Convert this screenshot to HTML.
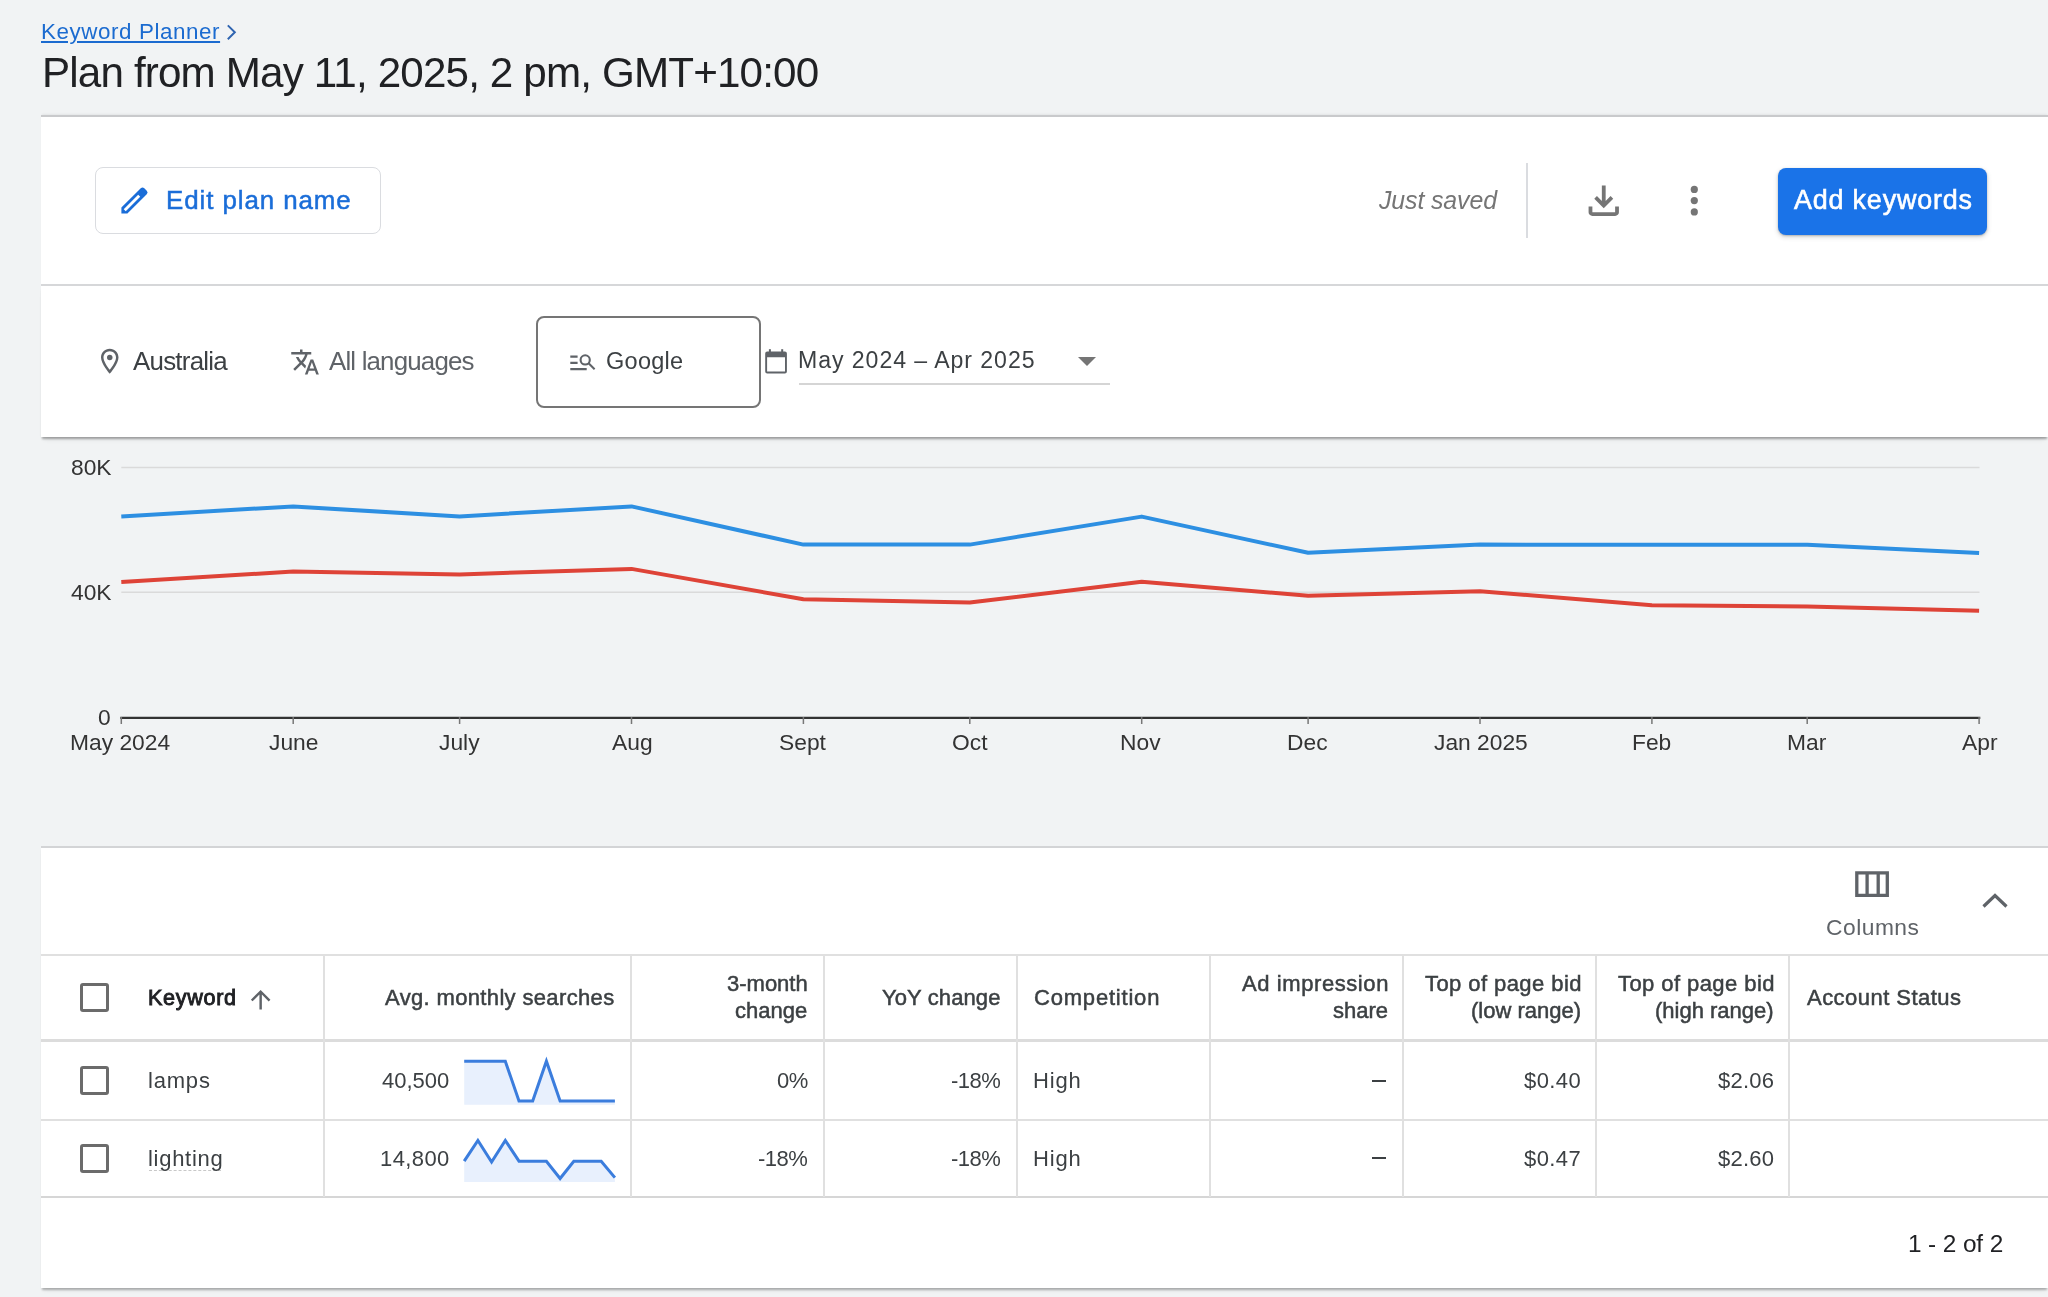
<!DOCTYPE html>
<html>
<head>
<meta charset="utf-8">
<style>
html,body{margin:0;padding:0;}
body{width:2048px;height:1297px;overflow:hidden;position:relative;background:#f1f3f4;font-family:"Liberation Sans",sans-serif;}
.t{position:absolute;white-space:nowrap;font-family:"Liberation Sans",sans-serif;will-change:transform;}
.a{position:absolute;}
.panel{position:absolute;background:#fff;}
.chk{position:absolute;width:22.8px;height:22.8px;border:3.5px solid #6b6b6b;border-radius:3px;box-sizing:content-box;}
.vl{position:absolute;width:2px;background:#e0e0e0;}
.hl{position:absolute;height:2px;background:#e0e0e0;}
</style>
</head>
<body>
<svg class="a" style="left:220px;top:20px" width="24" height="26" viewBox="0 0 24 26"><path fill="none" stroke="#2f64b0" stroke-width="2" d="M7.8,5.4 L14.8,12.3 L7.8,19.2"/></svg>
<!-- header panel -->
<div class="panel" style="left:41px;top:115px;width:2007px;height:170px;border-top:2px solid #c9cacc;box-shadow:0 -2px 2px -1px rgba(0,0,0,0.06);"></div>
<!-- divider -->
<div class="a" style="left:41px;top:284px;width:2007px;height:2px;background:#d6d7d9;"></div>
<!-- filter panel -->
<div class="panel" style="left:41px;top:286px;width:2007px;height:151px;box-shadow:0 3px 2px -1px rgba(0,0,0,0.30),0 5px 5px -3px rgba(0,0,0,0.10);"></div>

<!-- edit plan name button -->
<div class="a" style="left:95px;top:167px;width:284px;height:65px;border:1.5px solid #dadce0;border-radius:8px;background:#fff;"></div>
<!-- pencil -->
<svg class="a" style="left:110px;top:180px" width="44" height="40" viewBox="0 0 44 40"><path fill="#1a6dd8" fill-rule="evenodd" d="M11.4,33.6 V27.6 L30.75,8.26 Q32.52,6.49 34.29,8.26 L36.75,10.72 Q38.52,12.49 36.75,14.26 L17.4,33.6 Z M13.71,29.26 L28.2,14.77 L30.24,16.8 L15.74,31.3 Z"/></svg>

<!-- separator -->
<div class="a" style="left:1526px;top:163px;width:2px;height:75px;background:#dadce0;"></div>
<!-- download icon -->
<svg class="a" style="left:1580.5px;top:178px" width="45.5" height="45.5" viewBox="0 -960 960 960"><path fill="#757575" d="M480-320 280-520l56-58 104 104v-326h80v326l104-104 56 58-200 200ZM240-160q-33 0-56.5-23.5T160-240v-120h80v120h480v-120h80v120q0 33-23.5 56.5T720-160H240Z"/></svg>
<!-- more vert -->
<svg class="a" style="left:1684px;top:180px" width="20" height="40" viewBox="0 0 20 40"><circle cx="10.3" cy="9.4" r="3.6" fill="#757575"/><circle cx="10.3" cy="20.6" r="3.6" fill="#757575"/><circle cx="10.3" cy="31.9" r="3.6" fill="#757575"/></svg>
<!-- add keywords -->
<div class="a" style="left:1778px;top:168px;width:209px;height:67px;background:#1a73e8;border-radius:8px;box-shadow:0 1px 2px rgba(60,64,67,0.3),0 2px 4px 1px rgba(60,64,67,0.15);"></div>

<!-- filters -->
<svg class="a" style="left:99.5px;top:348.4px" width="19.5" height="26.25" viewBox="4.2 1.5 15.6 21"><path fill="#5f6368" d="M12 2C8.13 2 5 5.13 5 9c0 5.25 7 13 7 13s7-7.75 7-13c0-3.87-3.13-7-7-7zM7 9c0-2.76 2.24-5 5-5s5 2.24 5 5c0 2.88-2.88 7.19-5 9.88C9.92 16.21 7 11.85 7 9z"/><circle cx="12" cy="9" r="2.2" fill="#5f6368"/></svg>
<svg class="a" style="left:290px;top:347px" width="30" height="30" viewBox="0 -960 960 960"><path fill="#5f6368" d="m476-80 182-480h84L924-80h-84l-43-122H603L560-80h-84ZM160-200l-56-56 202-202q-35-35-63.5-80T190-640h84q20 39 40 68t48 58q33-33 68.5-92.5T484-720H40v-80h280v-80h80v80h280v80H564q-21 72-63 148t-83 116l96 98-30 82-122-125-202 201Zm468-72h144l-72-204-72 204Z"/></svg>
<div class="a" style="left:536px;top:316px;width:221px;height:88px;border:2px solid #757575;border-radius:8px;"></div>
<svg class="a" style="left:560px;top:340px" width="40" height="40" viewBox="560 340 40 40"><g fill="none" stroke="#5f6368" stroke-width="2.1"><path d="M570.3,356.6 H577.6 M570.3,362.9 H577.6 M570.3,369.1 H586.7"/><circle cx="585.2" cy="359.9" r="4.6"/><path d="M588.6,363.3 L594.6,369.3"/></g></svg>
<svg class="a" style="left:760px;top:345px" width="32" height="32" viewBox="760 345 32 32"><g fill="#5f6368"><path fill-rule="evenodd" d="M767.2,351.4 H784.9 Q786.9,351.4 786.9,353.4 V371.4 Q786.9,373.4 784.9,373.4 H767.2 Q765.2,373.4 765.2,371.4 V353.4 Q765.2,351.4 767.2,351.4 Z M767.1,357.2 V371.5 H785 V357.2 Z"/><rect x="768.9" y="349.2" width="2" height="3"/><rect x="781.2" y="349.2" width="2" height="3"/></g></svg>
<svg class="a" style="left:1076px;top:355px" width="22" height="14" viewBox="0 0 22 14"><path fill="#757575" d="M2 2h18l-9 9z"/></svg>
<div class="a" style="left:799px;top:383.3px;width:311px;height:1.6px;background:#d5d5d5;"></div>

<!-- chart -->
<svg class="a" style="left:0;top:0" width="2048" height="800" viewBox="0 0 2048 800">
  <line x1="121.3" y1="467.5" x2="1979.5" y2="467.5" stroke="#dadada" stroke-width="1.6"/>
  <line x1="121.3" y1="592.3" x2="1979.5" y2="592.3" stroke="#dadada" stroke-width="1.6"/>
  <line x1="120.3" y1="717.8" x2="1980.3" y2="717.8" stroke="#333" stroke-width="2.2"/>
  <g stroke="#777" stroke-width="1.5">
  <line x1="121.3" y1="717" x2="121.3" y2="724"/><line x1="293.2" y1="717" x2="293.2" y2="724"/><line x1="459.6" y1="717" x2="459.6" y2="724"/><line x1="631.5" y1="717" x2="631.5" y2="724"/><line x1="803.4" y1="717" x2="803.4" y2="724"/><line x1="969.8" y1="717" x2="969.8" y2="724"/><line x1="1141.7" y1="717" x2="1141.7" y2="724"/><line x1="1308.1" y1="717" x2="1308.1" y2="724"/><line x1="1480" y1="717" x2="1480" y2="724"/><line x1="1651.9" y1="717" x2="1651.9" y2="724"/><line x1="1807.2" y1="717" x2="1807.2" y2="724"/><line x1="1979.1" y1="717" x2="1979.1" y2="724"/>
  </g>
  <polyline fill="none" stroke="#2d8fe2" stroke-width="4" stroke-linejoin="round" points="121.3,516.4 293.2,506.4 459.6,516.4 631.5,506.4 803.4,544.6 969.8,544.6 1141.7,516.6 1308.1,552.8 1480,544.6 1651.9,544.7 1807.2,544.7 1979.1,552.9"/>
  <polyline fill="none" stroke="#de4337" stroke-width="4" stroke-linejoin="round" points="121.3,582.0 293.2,571.5 459.6,574.4 631.5,568.9 803.4,599.3 969.8,602.5 1141.7,581.7 1308.1,595.7 1480,591.3 1651.9,605.2 1807.2,606.5 1979.1,610.8"/>
</svg>

<!-- table panel -->
<div class="panel" style="left:41px;top:846px;width:2007px;height:440px;border-top:2px solid #d3d4d6;box-shadow:0 3px 2px -1px rgba(0,0,0,0.26),0 5px 5px -3px rgba(0,0,0,0.08);"></div>
<!-- columns icon -->
<svg class="a" style="left:1853px;top:869px" width="38" height="30" viewBox="0 0 38 30"><path fill="none" stroke="#5f6368" stroke-width="3.3" d="M3.8,3.8 H34.3 V26.4 H3.8 Z M14.1,3.8 V26.4 M25.2,3.8 V26.4"/></svg>
<!-- chevron up -->
<svg class="a" style="left:1980px;top:888px" width="30" height="24" viewBox="0 0 30 24"><path fill="none" stroke="#5f6368" stroke-width="3.2" d="M3.5,18.5 L15,7.5 L26.5,18.5"/></svg>

<!-- table lines -->
<div class="hl" style="left:41px;top:954px;width:2007px;"></div>
<div class="a" style="left:41px;top:1039px;width:2007px;height:3px;background:#dcdcdc;"></div>
<div class="hl" style="left:41px;top:1119px;width:2007px;"></div>
<div class="hl" style="left:41px;top:1196px;width:2007px;background:#d6d6d6;"></div>
<div class="vl" style="left:323px;top:955px;height:242px;"></div>
<div class="vl" style="left:630px;top:955px;height:242px;"></div>
<div class="vl" style="left:823px;top:955px;height:242px;"></div>
<div class="vl" style="left:1016px;top:955px;height:242px;"></div>
<div class="vl" style="left:1209px;top:955px;height:242px;"></div>
<div class="vl" style="left:1402px;top:955px;height:242px;"></div>
<div class="vl" style="left:1595px;top:955px;height:242px;"></div>
<div class="vl" style="left:1788px;top:955px;height:242px;"></div>

<!-- checkboxes -->
<div class="chk" style="left:80px;top:983px;"></div>
<div class="chk" style="left:80px;top:1066px;"></div>
<div class="chk" style="left:80px;top:1144px;"></div>
<!-- sort arrow -->
<svg class="a" style="left:245.5px;top:985.3px" width="29.3" height="29.3" viewBox="0 0 24 24"><path fill="#5f6368" d="M4 12l1.41 1.41L11 7.83V20h2V7.83l5.58 5.59L20 12l-8-8-8 8z"/></svg>

<!-- sparklines -->
<svg class="a" style="left:0;top:1000px" width="700" height="200" viewBox="0 1000 700 200">
  <path fill="#e8f0fd" d="M464.2,1061.2 L477.9,1061.2 L491.6,1061.2 L505.3,1061.2 L519,1100.9 L532.7,1100.9 L546.4,1061.2 L560.1,1100.9 L614.9,1100.9 L614.9,1104.8 L464.2,1104.8 Z"/>
  <polyline fill="none" stroke="#3b7ddd" stroke-width="3" stroke-linejoin="miter" points="464.2,1061.2 505.3,1061.2 519,1100.9 532.7,1100.9 546.4,1061.2 560.1,1100.9 614.9,1100.9"/>
  <path fill="#e8f0fd" d="M464.2,1161.2 L477.9,1140.4 L491.6,1162.0 L505.3,1140.4 L519,1161.2 L546.4,1161.2 L560.1,1178.5 L573.8,1161.2 L601.2,1161.2 L614.9,1177.6 L614.9,1181.9 L464.2,1181.9 Z"/>
  <polyline fill="none" stroke="#3b7ddd" stroke-width="3" stroke-linejoin="miter" points="464.2,1161.2 477.9,1140.4 491.6,1162.0 505.3,1140.4 519,1161.2 546.4,1161.2 560.1,1178.5 573.8,1161.2 601.2,1161.2 614.9,1177.6"/>
</svg>
<!-- dashes -->
<div class="a" style="left:1372px;top:1080px;width:14px;height:2px;background:#3c4043;"></div>
<div class="a" style="left:1372px;top:1157px;width:14px;height:2px;background:#3c4043;"></div>
<!-- lighting dotted underline -->
<div class="a" style="left:149px;top:1170px;width:72px;height:0;border-top:1.5px dashed #c8c8c8;"></div>

<div class="t" style="left:40.9px;top:20.5px;font-size:22.4px;line-height:22.4px;color:#1b6bd0;letter-spacing:0.571px;text-decoration:underline;text-underline-offset:2px;text-decoration-thickness:1.6px;">Keyword Planner</div>
<div class="t" style="left:42.0px;top:52.3px;font-size:42.2px;line-height:42.2px;color:#202124;letter-spacing:-0.847px;">Plan from May 11, 2025, 2 pm, GMT+10:00</div>
<div class="t" style="left:166.3px;top:187.5px;font-size:25.9px;line-height:25.9px;color:#1a6dd8;letter-spacing:0.923px;-webkit-text-stroke:0.5px #1a6dd8;">Edit plan name</div>
<div class="t" style="left:1378.6px;top:188.2px;font-size:24.9px;line-height:24.9px;color:#757575;letter-spacing:-0.111px;font-style:italic;">Just saved</div>
<div class="t" style="left:1793.8px;top:187.4px;font-size:26.9px;line-height:26.9px;color:#ffffff;letter-spacing:0.818px;-webkit-text-stroke:0.6px #ffffff;">Add keywords</div>
<div class="t" style="left:133.3px;top:348.6px;font-size:25.9px;line-height:25.9px;color:#3c4043;letter-spacing:-0.750px;">Australia</div>
<div class="t" style="left:328.6px;top:348.6px;font-size:25.9px;line-height:25.9px;color:#5f6368;letter-spacing:-0.833px;">All languages</div>
<div class="t" style="left:606.1px;top:349.9px;font-size:23.5px;line-height:23.5px;color:#3c4043;letter-spacing:0.280px;">Google</div>
<div class="t" style="left:798.1px;top:349.2px;font-size:23.1px;line-height:23.1px;color:#3c4043;letter-spacing:0.944px;">May 2024 – Apr 2025</div>
<div class="t" style="left:71.2px;top:456.0px;font-size:22.8px;line-height:22.8px;color:#333333;">80K</div>
<div class="t" style="left:71.2px;top:581.2px;font-size:22.8px;line-height:22.8px;color:#333333;">40K</div>
<div class="t" style="left:98.3px;top:705.5px;font-size:22.8px;line-height:22.8px;color:#333333;">0</div>
<div class="t" style="left:70.3px;top:730.9px;font-size:22.8px;line-height:22.8px;color:#333333;">May 2024</div>
<div class="t" style="left:269.2px;top:730.9px;font-size:22.8px;line-height:22.8px;color:#333333;">June</div>
<div class="t" style="left:439.1px;top:730.9px;font-size:22.8px;line-height:22.8px;color:#333333;">July</div>
<div class="t" style="left:612.0px;top:730.9px;font-size:22.8px;line-height:22.8px;color:#333333;">Aug</div>
<div class="t" style="left:779.4px;top:730.9px;font-size:22.8px;line-height:22.8px;color:#333333;">Sept</div>
<div class="t" style="left:951.8px;top:730.9px;font-size:22.8px;line-height:22.8px;color:#333333;">Oct</div>
<div class="t" style="left:1120.2px;top:730.9px;font-size:22.8px;line-height:22.8px;color:#333333;">Nov</div>
<div class="t" style="left:1287.1px;top:730.9px;font-size:22.8px;line-height:22.8px;color:#333333;">Dec</div>
<div class="t" style="left:1433.5px;top:730.9px;font-size:22.8px;line-height:22.8px;color:#333333;">Jan 2025</div>
<div class="t" style="left:1631.9px;top:730.9px;font-size:22.8px;line-height:22.8px;color:#333333;">Feb</div>
<div class="t" style="left:1786.7px;top:730.9px;font-size:22.8px;line-height:22.8px;color:#333333;">Mar</div>
<div class="t" style="left:1961.6px;top:730.9px;font-size:22.8px;line-height:22.8px;color:#333333;">Apr</div>
<div class="t" style="left:1825.5px;top:916.1px;font-size:22.8px;line-height:22.8px;color:#5f6368;letter-spacing:0.500px;">Columns</div>
<div class="t" style="left:147.6px;top:986.8px;font-size:21.6px;line-height:21.6px;color:#202124;letter-spacing:0.667px;-webkit-text-stroke:0.9px #202124;">Keyword</div>
<div class="t" style="left:385.0px;top:986.8px;font-size:22.0px;line-height:22.0px;color:#3c4043;letter-spacing:0.350px;-webkit-text-stroke:0.5px #3c4043;">Avg. monthly searches</div>
<div class="t" style="left:727.0px;top:973.2px;font-size:22.0px;line-height:22.0px;color:#3c4043;-webkit-text-stroke:0.5px #3c4043;">3-month</div>
<div class="t" style="left:735.0px;top:1000.2px;font-size:22.0px;line-height:22.0px;color:#3c4043;-webkit-text-stroke:0.5px #3c4043;">change</div>
<div class="t" style="left:882.0px;top:986.8px;font-size:22.0px;line-height:22.0px;color:#3c4043;letter-spacing:0.111px;-webkit-text-stroke:0.5px #3c4043;">YoY change</div>
<div class="t" style="left:1033.5px;top:986.8px;font-size:22.0px;line-height:22.0px;color:#3c4043;letter-spacing:0.800px;-webkit-text-stroke:0.5px #3c4043;">Competition</div>
<div class="t" style="left:1241.8px;top:973.2px;font-size:22.0px;line-height:22.0px;color:#3c4043;letter-spacing:0.583px;-webkit-text-stroke:0.5px #3c4043;">Ad impression</div>
<div class="t" style="left:1332.8px;top:1000.2px;font-size:22.0px;line-height:22.0px;color:#3c4043;-webkit-text-stroke:0.5px #3c4043;">share</div>
<div class="t" style="left:1425.0px;top:973.2px;font-size:22.0px;line-height:22.0px;color:#3c4043;letter-spacing:0.429px;-webkit-text-stroke:0.5px #3c4043;">Top of page bid</div>
<div class="t" style="left:1471.0px;top:1000.2px;font-size:22.0px;line-height:22.0px;color:#3c4043;-webkit-text-stroke:0.5px #3c4043;">(low range)</div>
<div class="t" style="left:1617.5px;top:973.2px;font-size:22.0px;line-height:22.0px;color:#3c4043;letter-spacing:0.429px;-webkit-text-stroke:0.5px #3c4043;">Top of page bid</div>
<div class="t" style="left:1654.5px;top:1000.2px;font-size:22.0px;line-height:22.0px;color:#3c4043;-webkit-text-stroke:0.5px #3c4043;">(high range)</div>
<div class="t" style="left:1806.5px;top:986.8px;font-size:22.0px;line-height:22.0px;color:#3c4043;letter-spacing:0.462px;-webkit-text-stroke:0.5px #3c4043;">Account Status</div>
<div class="t" style="left:148.0px;top:1070.3px;font-size:22.0px;line-height:22.0px;color:#3c4043;letter-spacing:0.800px;">lamps</div>
<div class="t" style="left:381.6px;top:1070.3px;font-size:22.0px;line-height:22.0px;color:#3c4043;">40,500</div>
<div class="t" style="left:776.5px;top:1070.3px;font-size:22.0px;line-height:22.0px;color:#3c4043;letter-spacing:-0.500px;">0%</div>
<div class="t" style="left:950.5px;top:1070.3px;font-size:22.0px;line-height:22.0px;color:#3c4043;letter-spacing:-0.500px;">-18%</div>
<div class="t" style="left:1032.5px;top:1070.3px;font-size:22.0px;line-height:22.0px;color:#3c4043;letter-spacing:0.833px;">High</div>
<div class="t" style="left:1524.4px;top:1070.3px;font-size:22.0px;line-height:22.0px;color:#3c4043;letter-spacing:0.400px;">$0.40</div>
<div class="t" style="left:1717.5px;top:1070.3px;font-size:22.0px;line-height:22.0px;color:#3c4043;letter-spacing:0.250px;">$2.06</div>
<div class="t" style="left:148.0px;top:1148.1px;font-size:22.0px;line-height:22.0px;color:#3c4043;letter-spacing:0.714px;">lighting</div>
<div class="t" style="left:379.6px;top:1148.1px;font-size:22.0px;line-height:22.0px;color:#3c4043;letter-spacing:0.400px;">14,800</div>
<div class="t" style="left:757.5px;top:1148.1px;font-size:22.0px;line-height:22.0px;color:#3c4043;letter-spacing:-0.500px;">-18%</div>
<div class="t" style="left:950.5px;top:1148.1px;font-size:22.0px;line-height:22.0px;color:#3c4043;letter-spacing:-0.500px;">-18%</div>
<div class="t" style="left:1032.5px;top:1148.1px;font-size:22.0px;line-height:22.0px;color:#3c4043;letter-spacing:0.833px;">High</div>
<div class="t" style="left:1524.4px;top:1148.1px;font-size:22.0px;line-height:22.0px;color:#3c4043;letter-spacing:0.400px;">$0.47</div>
<div class="t" style="left:1717.5px;top:1148.1px;font-size:22.0px;line-height:22.0px;color:#3c4043;letter-spacing:0.250px;">$2.60</div>
<div class="t" style="left:1907.5px;top:1231.9px;font-size:24.4px;line-height:24.4px;color:#202124;letter-spacing:-0.111px;">1 - 2 of 2</div>
</body>
</html>
